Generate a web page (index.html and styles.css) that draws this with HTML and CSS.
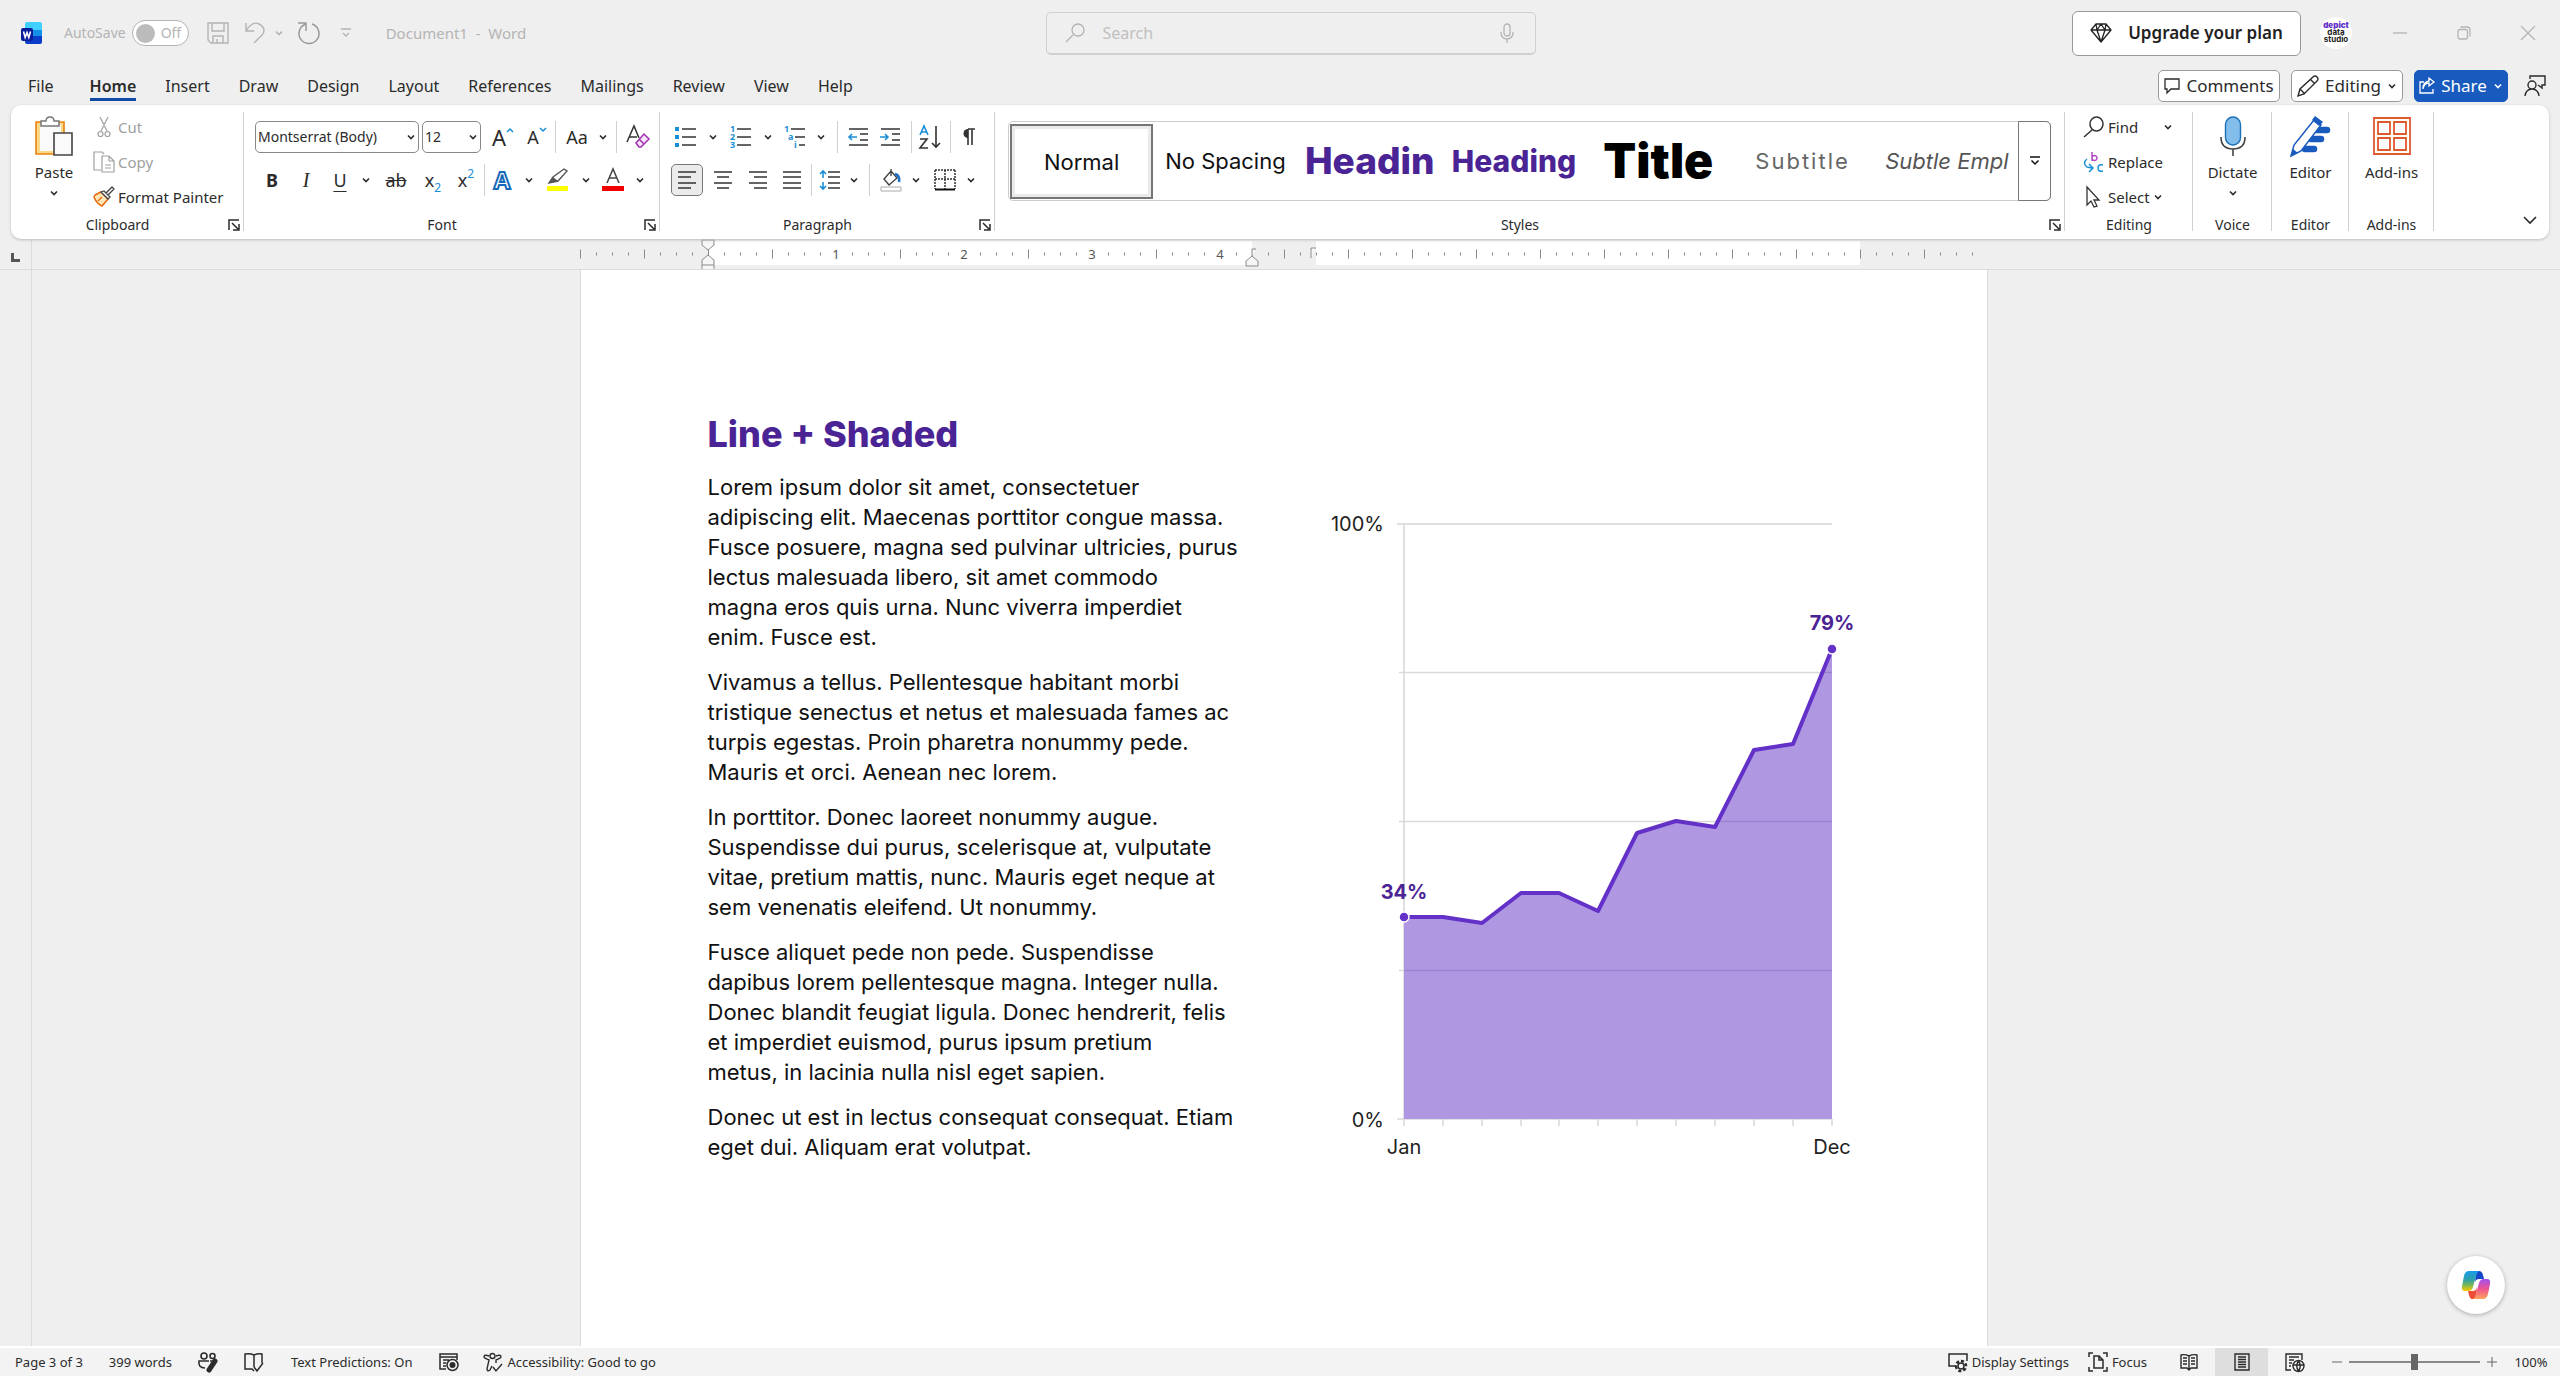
FILE: index.html
```
<!DOCTYPE html>
<html lang="en">
<head>
    <meta charset="UTF-8">
    <meta name="viewport" content="width=device-width, initial-scale=1.0">
    <title>Document1 - Word</title>
    <link rel="stylesheet" href="styles.css">
</head>
<body>
    <svg class="defs" aria-hidden="true">
        <symbol id="chev" viewBox="0 0 10 10"><path d="M2 3.5 L5 6.5 L8 3.5" fill="none" stroke="currentColor" stroke-width="1.6"/></symbol>
        <symbol id="launch" viewBox="0 0 12 12"><path d="M1 11V1H11M4 4L10 10M11 5V11H5" fill="none" stroke="currentColor" stroke-width="1.5"/></symbol>
    </svg>

    <!-- title bar -->
    <header class="titlebar">
        <div class="title-left">
            <svg class="logo" width="22" height="22" viewBox="0 0 22 22">
                <path d="M6 0H19A2 2 0 0 1 21 2V8H4V2A2 2 0 0 1 6 0Z" fill="#40d0ff"/>
                <path d="M4 8H21V15H4Z" fill="#1490e8"/>
                <path d="M4 14H21V20A2 2 0 0 1 19 22H6A2 2 0 0 1 4 20Z" fill="#0a3cc8"/>
                <rect x="0" y="6" width="12" height="13" rx="2" fill="#0a1e9c"/>
                <path d="M2.5 9.5L4.2 15.5L6 10.5L7.8 15.5L9.5 9.5" fill="none" stroke="#fff" stroke-width="1.6"/>
            </svg>
            <label class="autosave">AutoSave
                <input type="checkbox">
                <span class="toggle"><i></i>Off</span>
            </label>
            <div class="qat">
                <button aria-label="Save"><svg width="22" height="22" viewBox="0 0 22 22"><path d="M1 1H21V21H4L1 18ZM5 1V9H17V1M6 21V14H16V21M10 21V17" fill="none" stroke="currentColor" stroke-width="1.4"/></svg></button>
                <button aria-label="Undo"><svg width="20" height="22" viewBox="0 0 20 22"><path d="M1 1V9H9M1 9C5 2 10 0 14 2C20 5 20 10 17 13L9 21" fill="none" stroke="currentColor" stroke-width="1.4"/></svg></button>
                <button aria-label="Undo list"><svg width="10" height="10"><use href="#chev"/></svg></button>
                <button aria-label="Redo" class="darker"><svg width="24" height="24" viewBox="0 0 24 24"><path d="M2 2H10V10M10 3A10 10 0 1 0 16 3" fill="none" stroke="currentColor" stroke-width="1.5"/></svg></button>
                <button aria-label="Customize toolbar"><svg width="12" height="12" viewBox="0 0 12 12"><path d="M1 2H11M3 6L6 9L9 6" fill="none" stroke="currentColor" stroke-width="1.4"/></svg></button>
            </div>
            <span class="doc-title">Document1&nbsp; -&nbsp; Word</span>
        </div>
        <label class="search">
            <svg width="20" height="20" viewBox="0 0 20 20"><path d="M8 12L1 19M7 7A6 6 0 1 0 19 7A6 6 0 1 0 7 7" fill="none" stroke="currentColor" stroke-width="1.3"/></svg>
            <input type="text" placeholder="Search" aria-label="Search">
            <svg width="14" height="20" viewBox="0 0 14 20"><path d="M4 4A3 3 0 0 1 10 4V10A3 3 0 0 1 4 10ZM1 9V10A6 6 0 0 0 13 10V9M7 16V20" fill="none" stroke="currentColor" stroke-width="1.3"/></svg>
        </label>
        <div class="title-right">
            <button class="upgrade">
                <svg width="22" height="22" viewBox="0 0 22 22"><path d="M6 2H16L21 8L11 20L1 8ZM1 8H21M6 2L7 8L11 20L15 8L16 2M7 8L11 2L15 8" fill="none" stroke="currentColor" stroke-width="1.3" stroke-linejoin="round"/></svg>
                Upgrade your plan
            </button>
            <span class="avatar"><b>depict</b>data<br>studio</span>
            <div class="window-controls">
                <button aria-label="Minimize"><svg width="14" height="14" viewBox="0 0 14 14"><path d="M0 7H14" stroke="currentColor" stroke-width="1.3"/></svg></button>
                <button aria-label="Restore"><svg width="14" height="14" viewBox="0 0 14 14"><path d="M3.500 1H10Q13 1 13 4V10.500M3 3.500H8.500Q10.500 3.500 10.500 5.500V11Q10.500 13 8.500 13H3Q1 13 1 11V5.500Q1 3.500 3 3.500Z" fill="none" stroke="currentColor" stroke-width="1.3"/></svg></button>
                <button aria-label="Close"><svg width="14" height="14" viewBox="0 0 14 14"><path d="M0 0L14 14M14 0L0 14" stroke="currentColor" stroke-width="1.2"/></svg></button>
            </div>
        </div>
    </header>

    <!-- tabs -->
    <nav class="tabs">
        <button class="file">File</button>
        <button class="active">Home</button>
        <button>Insert</button>
        <button>Draw</button>
        <button>Design</button>
        <button>Layout</button>
        <button>References</button>
        <button>Mailings</button>
        <button>Review</button>
        <button>View</button>
        <button>Help</button>
        <div class="tab-actions">
            <button class="pill comments">
                <svg width="16" height="16" viewBox="0 0 16 16"><path d="M1 1H15V11H7L3 15V11H1Z" fill="none" stroke="currentColor" stroke-width="1.3"/></svg>Comments
            </button>
            <button class="pill editing">
                <svg width="22" height="22" viewBox="0 0 22 22"><path d="M1 21L3 14L16 2Q18 0 20 2Q22 4 20 6L7 19ZM3 14L8 19M13 4L18 9" fill="none" stroke="currentColor" stroke-width="1.4"/></svg>Editing
                <svg class="chev" width="10" height="10"><use href="#chev"/></svg>
            </button>
            <button class="pill share">
                <svg width="16" height="17" viewBox="0 0 16 17"><path d="M5 5H1V16H14V12M4 12Q5 6 10 6V9L15 5L10 1V4Q4 5 4 12Z" fill="none" stroke="currentColor" stroke-width="1.3"/></svg>Share
                <svg class="chev" width="10" height="10"><use href="#chev"/></svg>
            </button>
            <button class="person" aria-label="Presence"><svg width="22" height="22" viewBox="0 0 22 22"><path d="M6 4V1H21V10H18V13L14 10M1 21Q2 14 8 14Q14 14 15 21M4 10A4 4 0 1 0 12 10A4 4 0 1 0 4 10" fill="none" stroke="currentColor" stroke-width="1.4"/></svg></button>
        </div>
    </nav>

    <!-- ribbon -->
    <section class="ribbon">
        <div class="group clipboard">
            <div class="group-body">
                <button class="big">
                    <svg width="38" height="40" viewBox="0 0 38 40"><path d="M1 6H29V38H1Z" fill="#fbd98a" stroke="#e8820c" stroke-width="1.6"/><path d="M5 9H26V35H5Z" fill="#fafafa"/><path d="M6 10V5H11Q11 1 15 1Q19 1 19 5H24V10Z" fill="#fff" stroke="#777" stroke-width="1.5"/><path d="M19 17H37V39H19Z" fill="#fafafa" stroke="#444" stroke-width="1.6"/></svg>
                    <span>Paste</span>
                    <svg width="10" height="10"><use href="#chev"/></svg>
                </button>
                <div class="stack">
                    <button class="off"><svg width="22" height="22" viewBox="0 0 22 22"><path d="M7 1L14 15M15 1L8 15M5 18A2.500 2.500 0 1 0 10 18A2.500 2.500 0 1 0 5 18M12 18A2.500 2.500 0 1 0 17 18A2.500 2.500 0 1 0 12 18" fill="none" stroke="currentColor" stroke-width="1.2"/></svg>Cut</button>
                    <button class="off"><svg width="22" height="22" viewBox="0 0 22 22"><path d="M8 19H1V1H9L11 3M9 5H16L21 10V21H9ZM16 5V10H21M12 14H18M12 17H18" fill="none" stroke="currentColor" stroke-width="1.2"/></svg>Copy</button>
                    <button><svg width="22" height="22" viewBox="0 0 22 22"><path d="M2 9L8 6L15 13L9 20Q3 17 1 11Z" fill="#fde6b8" stroke="#e8690c" stroke-width="1.5"/><path d="M5 15L9 11" stroke="#e8690c" stroke-width="1.3"/><path d="M8 6L11 5L17 11L15 13ZM13 7L19 1L21 3L15 9" fill="#fff" stroke="#444" stroke-width="1.3"/></svg>Format Painter</button>
                </div>
            </div>
            <footer><span>Clipboard</span><button aria-label="Clipboard options"><svg width="12" height="12"><use href="#launch"/></svg></button></footer>
        </div>

        <div class="group font">
            <div class="group-body rows">
                <div class="row font-top">
                    <label class="combo"><select aria-label="Font"><option>Montserrat (Body)</option></select><svg width="10" height="10"><use href="#chev"/></svg></label>
                    <label class="combo"><select aria-label="Font size"><option>12</option></select><svg width="10" height="10"><use href="#chev"/></svg></label>
                    <button class="glyph grow">A<svg width="8" height="6" viewBox="0 0 8 6"><path d="M1 5L4 2L7 5" fill="none" stroke="#1b8fd6" stroke-width="1.5"/></svg></button>
                    <button class="glyph shrink">A<svg width="8" height="6" viewBox="0 0 8 6"><path d="M1 1L4 4L7 1" fill="none" stroke="#1b8fd6" stroke-width="1.5"/></svg></button>
                    <hr>
                    <button class="glyph case">Aa</button>
                    <button aria-label="Case list"><svg width="10" height="10"><use href="#chev"/></svg></button>
                    <hr>
                    <button aria-label="Clear formatting"><svg width="24" height="24" viewBox="0 0 24 24"><path d="M1 17L8 1L13 13M3 12H11" fill="none" stroke="#333" stroke-width="1.5"/><path d="M10 18L18 9L23 14L15 22H13ZM13 14L18 19" fill="#f6e4fa" stroke="#a030b0" stroke-width="1.5"/></svg></button>
                </div>
                <div class="row font-bottom">
                    <button class="glyph bold">B</button>
                    <button class="glyph italic">I</button>
                    <button class="glyph under">U</button>
                    <button aria-label="Underline list"><svg width="10" height="10"><use href="#chev"/></svg></button>
                    <button class="glyph strike">ab</button>
                    <button class="glyph script">x<sub>2</sub></button>
                    <button class="glyph script">x<sup>2</sup></button>
                    <hr>
                    <button class="glyph effects">A</button>
                    <button aria-label="Effects list"><svg width="10" height="10"><use href="#chev"/></svg></button>
                    <button aria-label="Highlight"><svg width="22" height="24" viewBox="0 0 22 24"><path d="M2 15L6 9L17 1L20 3L11 13Z" fill="#fff" stroke="#555" stroke-width="1.4"/><path d="M2 15L6 9L11 13Z" fill="#555"/><rect x="0" y="18" width="21" height="5" fill="#ff0"/></svg></button>
                    <button aria-label="Highlight list"><svg width="10" height="10"><use href="#chev"/></svg></button>
                    <button aria-label="Font color"><svg width="22" height="24" viewBox="0 0 22 24"><path d="M5 15L11 1L17 15M7 10H15" fill="none" stroke="#444" stroke-width="1.5"/><rect x="0" y="18" width="22" height="5" fill="#f00000"/></svg></button>
                    <button aria-label="Font color list"><svg width="10" height="10"><use href="#chev"/></svg></button>
                </div>
            </div>
            <footer><span>Font</span><button aria-label="Font options"><svg width="12" height="12"><use href="#launch"/></svg></button></footer>
        </div>

        <div class="group paragraph">
            <div class="group-body rows">
                <div class="row para-top">
                    <button aria-label="Bullets"><svg width="22" height="20" viewBox="0 0 22 20"><path d="M0 2H4M0 10H4M0 18H4" stroke="#1b8fd6" stroke-width="4"/><path d="M7 2H21M7 10H21M7 18H21" stroke="#333" stroke-width="1.6"/></svg></button>
                    <button aria-label="Bullet list"><svg width="10" height="10"><use href="#chev"/></svg></button>
                    <button aria-label="Numbering"><svg width="22" height="26" viewBox="0 0 22 26"><g class="tiny"><text x="0" y="8">1</text><text x="0" y="16">2</text><text x="0" y="24">3</text></g><path d="M7 5H21M7 13H21M7 21H21" stroke="#333" stroke-width="1.6"/></svg></button>
                    <button aria-label="Number list"><svg width="10" height="10"><use href="#chev"/></svg></button>
                    <button aria-label="Multilevel list"><svg width="22" height="26" viewBox="0 0 22 26"><g class="tiny"><text x="0" y="8">1</text><text x="4" y="16">a</text><text x="10" y="24">i</text></g><path d="M7 5H21M11 13H21M15 21H21" stroke="#333" stroke-width="1.6"/></svg></button>
                    <button aria-label="Levels"><svg width="10" height="10"><use href="#chev"/></svg></button>
                    <hr>
                    <button aria-label="Decrease indent"><svg width="20" height="20" viewBox="0 0 20 20"><path d="M1 2H20M12 7H20M12 13H20M1 18H20" stroke="#333" stroke-width="1.6"/><path d="M9 10H1M4 7L1 10L4 13" fill="none" stroke="#1b8fd6" stroke-width="1.6"/></svg></button>
                    <button aria-label="Increase indent"><svg width="20" height="20" viewBox="0 0 20 20"><path d="M1 2H20M12 7H20M12 13H20M1 18H20" stroke="#333" stroke-width="1.6"/><path d="M0 10H8M5 7L8 10L5 13" fill="none" stroke="#1b8fd6" stroke-width="1.6"/></svg></button>
                    <hr>
                    <button aria-label="Sort"><svg width="22" height="24" viewBox="0 0 22 24"><path d="M1 10L5 1L9 10M2 7H8" fill="none" stroke="#1b8fd6" stroke-width="1.6"/><path d="M1 14H8L1 23H9M17 1V22M13 18L17 22L21 18" fill="none" stroke="#333" stroke-width="1.6"/></svg></button>
                    <hr>
                    <button class="glyph" aria-label="Show marks"><svg width="14" height="18" viewBox="0 0 14 18"><path d="M6 1A4.500 4.500 0 0 0 6 10Z" fill="#333"/><path d="M6 1H13M6 1V17M10 1V17" stroke="#333" stroke-width="1.6"/></svg></button>
                </div>
                <div class="row para-bottom">
                    <button class="pressed" aria-label="Align left"><svg width="20" height="20" viewBox="0 0 20 20"><path d="M1 2H19M1 7H14M1 13H19M1 18H14" stroke="#333" stroke-width="1.6"/></svg></button>
                    <button aria-label="Center"><svg width="20" height="20" viewBox="0 0 20 20"><path d="M1 2H19M4 7H16M1 13H19M4 18H16" stroke="#333" stroke-width="1.6"/></svg></button>
                    <button aria-label="Align right"><svg width="20" height="20" viewBox="0 0 20 20"><path d="M1 2H19M6 7H19M1 13H19M6 18H19" stroke="#333" stroke-width="1.6"/></svg></button>
                    <button aria-label="Justify"><svg width="20" height="20" viewBox="0 0 20 20"><path d="M1 2H19M1 7H19M1 13H19M1 18H19" stroke="#333" stroke-width="1.6"/></svg></button>
                    <hr>
                    <button aria-label="Line spacing"><svg width="22" height="20" viewBox="0 0 22 20"><path d="M9 2H21M9 7H21M9 13H21M9 18H21" stroke="#333" stroke-width="1.6"/><path d="M4 8V1M1 4L4 1L7 4M4 12V19M1 16L4 19L7 16" fill="none" stroke="#1b8fd6" stroke-width="1.6"/></svg></button>
                    <button aria-label="Spacing list"><svg width="10" height="10"><use href="#chev"/></svg></button>
                    <hr>
                    <button aria-label="Shading"><svg width="22" height="24" viewBox="0 0 22 24"><path d="M4 11L11 3L17 10L9 17ZM11 3V1M11 3V8" fill="#fff" stroke="#444" stroke-width="1.4"/><path d="M15 6Q20 7 19 14" fill="none" stroke="#1b6fc6" stroke-width="2.500"/><path d="M1 19H21V23H1Z" fill="#fff" stroke="#aaa"/></svg></button>
                    <button aria-label="Shading list"><svg width="10" height="10"><use href="#chev"/></svg></button>
                    <button aria-label="Borders"><svg width="22" height="22" viewBox="0 0 22 22"><path d="M1 1H21M1 10H21M1 1V20M11 1V20M21 1V20" stroke="#333" stroke-width="1.500" stroke-dasharray="2 1"/><path d="M1 20.500H21" stroke="#111" stroke-width="2"/></svg></button>
                    <button aria-label="Border list"><svg width="10" height="10"><use href="#chev"/></svg></button>
                </div>
            </div>
            <footer><span>Paragraph</span><button aria-label="Paragraph options"><svg width="12" height="12"><use href="#launch"/></svg></button></footer>
        </div>

        <div class="group styles">
            <div class="group-body">
                <div class="gallery">
                    <button class="style selected">Normal</button>
                    <button class="style">No Spacing</button>
                    <button class="style h1">Headin</button>
                    <button class="style h2">Heading</button>
                    <button class="style title">Title</button>
                    <button class="style subtitle">Subtitle</button>
                    <button class="style emphasis">Subtle Empl</button>
                    <button class="more" aria-label="More styles"><svg width="12" height="12" viewBox="0 0 12 12"><path d="M1 2H11M2.500 5.500L6 9L9.500 5.500" fill="none" stroke="currentColor" stroke-width="1.5"/></svg></button>
                </div>
            </div>
            <footer><span>Styles</span><button aria-label="Styles options"><svg width="12" height="12"><use href="#launch"/></svg></button></footer>
        </div>

        <div class="group edit">
            <div class="group-body">
                <div class="stack">
                    <button><svg width="22" height="22" viewBox="0 0 22 22"><path d="M9 14L1 21M7 8A6.500 7 0 1 0 20 8A6.500 7 0 1 0 7 8" fill="none" stroke="#333" stroke-width="1.5"/></svg>Find<svg class="chev far" width="10" height="10"><use href="#chev"/></svg></button>
                    <button><svg width="22" height="22" viewBox="0 0 22 22"><path d="M9 1V10M9 7A2.500 2.500 0 1 1 14 7A2.500 2.500 0 1 1 9 7" fill="none" stroke="#b04cc0" stroke-width="1.5"/><path d="M4 8Q-1 12 4 16L9 17M6 13L10 17L6 21M20 14Q15 13 15 17Q15 21 20 20" fill="none" stroke="#1b8fd6" stroke-width="1.5"/></svg>Replace</button>
                    <button><svg width="22" height="22" viewBox="0 0 22 22"><path d="M4 1V19L8 15L11 21L14 20L11 14H16Z" fill="#fff" stroke="#333" stroke-width="1.3"/></svg>Select<svg class="chev" width="10" height="10"><use href="#chev"/></svg></button>
                </div>
            </div>
            <footer><span>Editing</span></footer>
        </div>

        <div class="group voice">
            <div class="group-body">
                <button class="big">
                    <svg width="26" height="40" viewBox="0 0 26 40"><rect x="5.500" y="1" width="15" height="28" rx="7.500" fill="#83bdec" stroke="#1a6fb5" stroke-width="1.4"/><path d="M1 21Q1 33 13 33Q25 33 25 21M13 33V40" fill="none" stroke="#444" stroke-width="1.6"/></svg>
                    <span>Dictate</span>
                    <svg width="10" height="10"><use href="#chev"/></svg>
                </button>
            </div>
            <footer><span>Voice</span></footer>
        </div>

        <div class="group editor">
            <div class="group-body">
                <button class="big">
                    <svg width="42" height="40" viewBox="0 0 42 40"><path d="M26 14H37M21 23H31M15 33H24" stroke="#185abd" stroke-width="6.500" stroke-linecap="round"/><path d="M1 40L4 29L24 4L31 9L11 35Z" fill="#fff" stroke="#185abd" stroke-width="1.5"/><path d="M22 4L25 0L33 6L29 10Z" fill="#185abd"/><path d="M1 40L3 33L8 37Z" fill="#185abd"/></svg>
                    <span>Editor</span>
                </button>
            </div>
            <footer><span>Editor</span></footer>
        </div>

        <div class="group addins">
            <div class="group-body">
                <button class="big">
                    <svg width="38" height="40" viewBox="0 0 38 40"><path d="M1 2H37V38H1ZM5 6H17V18H5ZM21 6H33V18H21ZM5 22H17V34H5ZM21 22H33V34H21Z" fill="none" stroke="#e05a2b" stroke-width="1.8"/></svg>
                    <span>Add-ins</span>
                </button>
            </div>
            <footer><span>Add-ins</span></footer>
        </div>

        <button class="collapse" aria-label="Collapse ribbon"><svg width="14" height="10" viewBox="0 0 14 10"><path d="M1 2L7 8L13 2" fill="none" stroke="currentColor" stroke-width="1.6"/></svg></button>
    </section>

    <!-- horizontal ruler -->
    <div class="ruler">
        <div class="corner"><svg width="10" height="10" viewBox="0 0 10 10"><path d="M1.500 1V8.500H9" fill="none" stroke="#555" stroke-width="3"/></svg></div>
        <div class="ruler-track">
            <svg width="1408" height="30" viewBox="0 0 1408 30">
                <rect x="128" y="2" width="544" height="24" fill="#fff"/>
                <rect x="736" y="2" width="544" height="24" fill="#fff"/>
                <path d="M0 15H1408" stroke="#8a8a8a" stroke-width="3" stroke-dasharray="1 15"/>
                <path d="M0 15H1408" stroke="#8a8a8a" stroke-width="9" stroke-dasharray="1 63"/>
                <path d="M249 5H263V24H249ZM377 5H391V24H377ZM505 5H519V24H505ZM633 5H647V24H633Z" fill="#fff"/>
                <g class="inches"><text x="256" y="20">1</text><text x="384" y="20">2</text><text x="512" y="20">3</text><text x="640" y="20">4</text></g>
                <path d="M122 1H134V6L128 11L122 6ZM122 30V21L128 16L134 21V30M122 26H134M666 27V22L672 17L678 22V27ZM672 17V10H676M731 19V9H736" fill="#f6f6f6" stroke="#8a8a8a"/>
            </svg>
        </div>
    </div>

    <!-- document -->
    <main class="workspace">
        <div class="side-ruler"></div>
        <div class="canvas">
            <article class="page">
                <div class="copy">
                    <h1>Line + Shaded</h1>
                    <p>Lorem ipsum dolor sit amet, consectetuer<br>adipiscing elit. Maecenas porttitor congue massa.<br>Fusce posuere, magna sed pulvinar ultricies, purus<br>lectus malesuada libero, sit amet commodo<br>magna eros quis urna. Nunc viverra imperdiet<br>enim. Fusce est.</p>
                    <p>Vivamus a tellus. Pellentesque habitant morbi<br>tristique senectus et netus et malesuada fames ac<br>turpis egestas. Proin pharetra nonummy pede.<br>Mauris et orci. Aenean nec lorem.</p>
                    <p>In porttitor. Donec laoreet nonummy augue.<br>Suspendisse dui purus, scelerisque at, vulputate<br>vitae, pretium mattis, nunc. Mauris eget neque at<br>sem venenatis eleifend. Ut nonummy.</p>
                    <p>Fusce aliquet pede non pede. Suspendisse<br>dapibus lorem pellentesque magna. Integer nulla.<br>Donec blandit feugiat ligula. Donec hendrerit, felis<br>et imperdiet euismod, purus ipsum pretium<br>metus, in lacinia nulla nisl eget sapien.</p>
                    <p>Donec ut est in lectus consequat consequat. Etiam<br>eget dui. Aliquam erat volutpat.</p>
                </div>
                <svg class="chart" viewBox="0 0 544 750">
                    <path d="M81 114H516M88 114V709" stroke="#e0e0e0" stroke-width="2" fill="none"/>
                    <path d="M83 262.500H516M83 411.500H516M83 560.500H516" stroke="#d9d9d9" stroke-width="1.500"/>
                    <path d="M81 709H516M88 709V716M127 709V716M166 709V716M205 709V716M243 709V716M282 709V716M321 709V716M360 709V716M399 709V716M438 709V716M477 709V716M516 709V716" stroke="#d9d9d9" stroke-width="1.500"/>
                    <path d="M88 507L127 507L166 513L205 483L243 483L282 501L321 423L360 411L399 417L438 340L477 334L516 239V709H88Z" fill="#b097e2"/>
                    <path d="M402 411.500H516M88 560.500H516M507 262.500H516" fill="none" stroke="#9b82cf" stroke-width="1.500"/>
                    <path d="M88 507L127 507L166 513L205 483L243 483L282 501L321 423L360 411L399 417L438 340L477 334L516 239" fill="none" stroke="#6330c8" stroke-width="4" stroke-linejoin="round"/>
                    <circle cx="88" cy="507" r="5" fill="#6330c8" stroke="#fff" stroke-width="1.500"/>
                    <circle cx="516" cy="239" r="5" fill="#6330c8" stroke="#fff" stroke-width="1.500"/>
                    <text class="end" x="68" y="121">100%</text>
                    <text class="end" x="68" y="717">0%</text>
                    <text class="mid" x="88" y="744">Jan</text>
                    <text class="mid" x="516" y="744">Dec</text>
                    <text class="mid value" x="88" y="489">34%</text>
                    <text class="mid value" x="516" y="220">79%</text>
                </svg>
            </article>
        </div>
        <button class="copilot" aria-label="Copilot">
            <svg width="30" height="28" viewBox="0 0 30 28">
                <defs>
                    <linearGradient id="cool" x1="0" y1="0" x2="0" y2="1"><stop offset="0" stop-color="#189be8"/><stop offset=".45" stop-color="#2ea1a8"/><stop offset=".75" stop-color="#8dbb46"/><stop offset="1" stop-color="#ffc800"/></linearGradient>
                    <linearGradient id="warm" x1="0" y1="0" x2="0" y2="1"><stop offset="0" stop-color="#a04ff0"/><stop offset=".5" stop-color="#ee5590"/><stop offset="1" stop-color="#ffa45c"/></linearGradient>
                </defs>
                <path d="M15 0H18Q21 0 22 4L23 8H18Q15 8 14 11Z" fill="#1346c8"/>
                <path d="M15 28H11Q9 28 8 24L7 20H12Q15 20 16 16Z" fill="#ee4c34"/>
                <path d="M8 0H18Q16 1 15 5L12 16Q11 20 7 20H4Q0 20 1 15L3 5Q4 0 8 0Z" fill="url(#cool)"/>
                <path d="M22 28H12Q14 27 15 23L18 12Q19 8 23 8H26Q30 8 29 13L27 23Q26 28 22 28Z" fill="url(#warm)"/>
            </svg>
        </button>
    </main>

    <!-- status bar -->
    <footer class="statusbar">
        <button>Page 3 of 3</button>
        <button class="words">399 words</button>
        <button aria-label="Coauthoring"><svg width="22" height="20" viewBox="0 0 22 20"><path d="M3 4A3 3 0 1 0 9 4A3 3 0 1 0 3 4M12 4A2.500 2.500 0 1 0 17 4A2.500 2.500 0 1 0 12 4M11 9H1Q0 16 7 16M12 9H17" fill="none" stroke="currentColor" stroke-width="1.6"/><path d="M11 18L17 9" stroke="currentColor" stroke-width="5" stroke-linecap="round"/></svg></button>
        <button class="proof" aria-label="Proofing"><svg width="20" height="20" viewBox="0 0 20 20"><path d="M10 3Q6 1 1 2V17H8L10 19M10 3Q14 1 18 2V11M10 3V15M10 15L13 19L19 11" fill="none" stroke="currentColor" stroke-width="1.5"/></svg></button>
        <button class="predict">Text Predictions: On</button>
        <button aria-label="Macro"><svg width="20" height="20" viewBox="0 0 20 20"><path d="M7 17H1V2H18V8M1 5H18M4 8H10M4 11H7M4 14H7M8 13A5.500 5.500 0 1 0 19 13A5.500 5.500 0 1 0 8 13" fill="none" stroke="currentColor" stroke-width="1.5"/><circle cx="13.500" cy="13" r="3" fill="currentColor"/></svg></button>
        <button class="access"><svg width="20" height="20" viewBox="0 0 20 20"><path d="M7 4A2.500 2.500 0 1 0 12 4A2.500 2.500 0 1 0 7 4M6 4Q1 2 1 5Q1 6 6 8L4 17Q4 20 7 18L9 14M13 4Q18 2 18 5Q18 6 13 8V11M10 15L13 19L19 12" fill="none" stroke="currentColor" stroke-width="1.4"/></svg>Accessibility: Good to go</button>
        <div class="status-right">
            <button><svg width="20" height="20" viewBox="0 0 20 20"><path d="M8 14H1V2H19V9" fill="none" stroke="currentColor" stroke-width="1.5"/><path d="M8 14A5 5 0 1 0 18 14A5 5 0 1 0 8 14" fill="none" stroke="currentColor" stroke-width="2.500" stroke-dasharray="3 2"/><circle cx="13" cy="14" r="3" fill="none" stroke="currentColor" stroke-width="1.5"/></svg>Display Settings</button>
            <button><svg width="20" height="20" viewBox="0 0 20 20"><path d="M1 5V1H5M15 1H19V5M19 15V19H15M5 19H1V15M6 4H11L15 8V16H6ZM11 4V8H15" fill="none" stroke="currentColor" stroke-width="1.5"/></svg>Focus</button>
            <div class="views">
                <button aria-label="Read mode"><svg width="18" height="18" viewBox="0 0 18 18"><path d="M9 3Q5 1 1 2V15H7L9 17L11 15H17V2Q13 1 9 3V16M3 5H7M3 8H7M3 11H7M11 5H15M11 8H15M11 11H15" fill="none" stroke="currentColor" stroke-width="1.4"/></svg></button>
                <button class="on" aria-label="Print layout"><svg width="16" height="18" viewBox="0 0 16 18"><path d="M1 1H15V17H1ZM4 4H12M4 6.500H12M4 9H12M4 11.500H12M4 14H12" fill="none" stroke="currentColor" stroke-width="1.4"/></svg></button>
                <button aria-label="Web layout"><svg width="20" height="19" viewBox="0 0 20 19"><path d="M6 17H1V1H17V7M4 4H14M4 7H9M4 10H7M4 13H6M8 13A5 5 0 1 0 19 13A5 5 0 1 0 8 13M8 12H19M13.500 8Q10 13 13.500 18Q17 13 13.500 8" fill="none" stroke="currentColor" stroke-width="1.4"/></svg></button>
            </div>
            <button class="step" aria-label="Zoom out"><svg width="12" height="12" viewBox="0 0 12 12"><path d="M1 6H11" stroke="#666"/></svg></button>
            <input class="zoom" type="range" min="0" max="100" value="50" aria-label="Zoom">
            <button class="step" aria-label="Zoom in"><svg width="12" height="12" viewBox="0 0 12 12"><path d="M1 6H11M6 1V11" stroke="#666"/></svg></button>
            <button class="percent">100%</button>
        </div>
    </footer>
</body>
</html>
```
FILE: styles.css
```
* {
    box-sizing: border-box;
}
body {
    margin: 0;
    height: 100vh;
    display: flex;
    flex-direction: column;
    overflow: hidden;
    background-color: #efefef;
    color: #2b2b2b;
    font-family: "Noto Sans", sans-serif;
    font-size: 15px;
    line-height: 20px;
}
button, input, select {
    font: inherit;
    color: inherit;
}
button {
    display: flex;
    align-items: center;
    justify-content: center;
    padding: 0;
    border: 0;
    background: none;
    white-space: nowrap;
}
svg {
    display: block;
    flex-shrink: 0;
    overflow: visible;
}
.defs {
    display: none;
}

/* title bar */
.titlebar {
    display: grid;
    grid-template-columns: minmax(0, 1fr) 490px minmax(0, 1fr);
    align-items: center;
    height: 66px;
    padding-left: 21px;
    color: #b4b4b4;
}
.title-left, .title-right {
    display: flex;
    align-items: center;
}
.title-right {
    justify-content: flex-end;
}
.autosave {
    display: flex;
    align-items: center;
    gap: 6px;
    margin-left: 21px;
    font-size: 14px;
}
.autosave input {
    position: absolute;
    opacity: 0;
}
.toggle {
    display: flex;
    align-items: center;
    gap: 6px;
    width: 57px;
    height: 26px;
    padding-left: 3px;
    border: 1px solid #b4b4b4;
    border-radius: 13px;
    background-color: #fff;
}
.toggle i {
    width: 19px;
    height: 19px;
    border-radius: 50%;
    background-color: #bbb;
}
.qat {
    display: grid;
    grid-template-columns: 40px 34px 14px 44px 32px;
    margin-left: 9px;
}
.darker {
    color: #9a9a9a;
}
.doc-title {
    margin-left: 24px;
}
.search {
    display: flex;
    align-items: center;
    gap: 18px;
    height: 43px;
    padding: 0 21px 0 18px;
    border: 1px solid #d0d0d0;
    border-bottom-width: 2px;
    border-radius: 5px;
}
.search input {
    flex: 1;
    padding: 0;
    border: 0;
    outline: 0;
    background: none;
    font-size: 16px;
}
.search input::placeholder {
    color: #c0c0c0;
}
.upgrade {
    gap: 16px;
    width: 229px;
    height: 45px;
    margin-right: 19px;
    border: 1px solid #999;
    border-radius: 6px;
    background-color: #fff;
    color: #222;
    font-size: 17px;
    font-weight: 600;
}
.avatar {
    width: 32px;
    height: 32px;
    padding-top: 5px;
    margin-right: 16px;
    border-radius: 50%;
    background-color: #fff;
    color: #222;
    font-family: Inter, sans-serif;
    font-size: 8px;
    font-weight: 700;
    line-height: 7px;
    text-align: center;
}
.avatar b {
    display: block;
    color: #6330c8;
}
.window-controls {
    display: grid;
    grid-template-columns: repeat(3, 64px);
}

/* tabs */
.tabs {
    display: flex;
    align-items: center;
    gap: 29px;
    height: 39px;
    padding: 0 14px 0 28px;
    font-size: 16px;
}
.tabs > button {
    height: 31px;
    border-top: 3px solid transparent;
    border-bottom: 3px solid transparent;
}
.tabs .file {
    margin-right: 7px;
}
.tabs .active {
    border-bottom-color: #1249a5;
    font-weight: 600;
}
.tab-actions {
    display: flex;
    align-items: center;
    gap: 11px;
    margin-left: auto;
}
.pill {
    gap: 6px;
    height: 32px;
    border: 1px solid #999;
    border-radius: 5px;
    background-color: #fff;
    font-size: 17px;
}
.comments {
    width: 122px;
}
.editing {
    width: 112px;
}
.share {
    width: 94px;
    margin-right: 5px;
    border-color: #185abd;
    background-color: #185abd;
    color: #fff;
}

/* ribbon */
.ribbon {
    position: relative;
    z-index: 1;
    display: flex;
    height: 134px;
    margin: 0 11px;
    border-radius: 10px;
    background-color: #fff;
    box-shadow: 0 1px 3px #bbb;
}
.group {
    position: relative;
    display: flex;
    flex-direction: column;
    justify-content: space-between;
}
.group::after {
    content: "";
    position: absolute;
    top: 7px;
    right: 0;
    bottom: 8px;
    border-right: 1px solid #d0d0d0;
}
.group-body {
    display: flex;
    height: 110px;
}
.group footer {
    display: flex;
    align-items: center;
    height: 20px;
    margin-bottom: 4px;
    font-size: 14px;
}
.group footer span {
    flex: 1;
    text-align: center;
}
.group footer button {
    width: 12px;
    margin: 0 4px;
}
.clipboard {
    width: 233px;
}
.font {
    width: 416px;
}
.paragraph {
    width: 335px;
}
.styles {
    flex: 1;
}
.edit {
    width: 128px;
}
.voice {
    width: 79px;
}
.editor {
    width: 77px;
}
.addins {
    width: 85px;
}
.collapse {
    align-items: flex-end;
    width: 115px;
    padding: 0 0 14px 76px;
}
.big {
    flex: 1;
    flex-direction: column;
    justify-content: flex-start;
    gap: 6px;
    padding-top: 11px;
}
.clipboard .big {
    flex: none;
    width: 82px;
    padding-left: 4px;
}
.stack {
    display: grid;
    grid-template-rows: repeat(3, 35px);
    padding-top: 4px;
}
.stack button {
    justify-content: flex-start;
    gap: 3px;
}
.edit .stack {
    padding-left: 18px;
}
.far {
    margin-left: 22px;
}
.off {
    color: #a0a0a0;
}
.rows {
    flex-direction: column;
    gap: 11px;
    padding: 16px 0 0 11px;
}
.paragraph .rows {
    padding-left: 9px;
}
.row {
    display: grid;
    height: 32px;
}
.row hr {
    width: 1px;
    height: 32px;
    margin: 0 auto;
    border: 0;
    background-color: #d0d0d0;
}
.font-top {
    grid-template-columns: 167px 62px 38px 30px 6px 38px 14px 12px 32px;
}
.font-bottom {
    grid-template-columns: 34px 34px 34px 18px 42px 32px 34px 2px 34px 20px 38px 18px 36px 18px;
}
.para-top {
    grid-template-columns: 34px 20px 36px 18px 36px 16px 16px 26px 38px 4px 34px 6px 32px;
}
.para-bottom {
    grid-template-columns: 36px 36px 34px 34px 4px 34px 14px 16px 28px 22px 36px 16px;
}
.combo {
    display: grid;
    align-items: center;
    margin-right: 3px;
}
.combo select {
    grid-area: 1 / 1;
    height: 32px;
    padding: 0 2px;
    border: 1px solid #888;
    border-radius: 5px;
    background-color: #fff;
    appearance: none;
    font-size: 14px;
}
.combo svg {
    grid-area: 1 / 1;
    justify-self: end;
    margin-right: 3px;
    pointer-events: none;
}
.glyph {
    font-size: 18px;
}
.grow {
    font-size: 22px;
}
.grow svg, .shrink svg {
    align-self: flex-start;
    margin-top: 6px;
}
.bold {
    font-weight: 700;
}
.italic {
    font-family: "Liberation Serif", serif;
    font-style: italic;
    font-size: 20px;
}
.under {
    text-decoration: underline;
    text-underline-offset: 4px;
}
.strike {
    text-decoration: line-through;
}
.script sub, .script sup {
    color: #1b8fd6;
    font-size: 12px;
    line-height: 12px;
}
.script sub {
    align-self: flex-end;
    margin-bottom: 2px;
}
.script sup {
    align-self: flex-start;
    margin-top: 4px;
}
.effects {
    color: #fff;
    font-size: 24px;
    font-weight: 700;
    -webkit-text-stroke: 2px #1668b8;
}
.tiny {
    fill: #1b8fd6;
    font-size: 9px;
    font-weight: 700;
}
.pressed {
    margin: 0 2px;
    border: 1px solid #777;
    border-radius: 5px;
    background-color: #ebebeb;
}

/* styles gallery */
.gallery {
    display: grid;
    grid-template-columns: repeat(7, minmax(0, 1fr)) 31px;
    flex: 1;
    height: 80px;
    margin: 16px 14px 0 13px;
    border: 1px solid #ccc;
    border-radius: 5px;
    color: #111;
}
.style {
    overflow: hidden;
    font-family: Inter, sans-serif;
    font-size: 22px;
    line-height: 60px;
}
.selected {
    margin: 2px 0 1px 1px;
    border: 2px solid #767676;
    box-shadow: inset 0 0 0 3px #ebebeb;
}
.h1, .h2, .title {
    font-weight: 800;
    color: #4a2394;
}
.h1 {
    font-size: 37px;
}
.h2 {
    font-size: 30px;
}
.title {
    color: #000;
    font-size: 48px;
    font-weight: 900;
}
.subtitle {
    color: #666;
    letter-spacing: 2px;
}
.emphasis {
    color: #555;
    font-style: italic;
}
.more {
    margin: -1px;
    border: 1px solid #777;
    border-radius: 0 5px 5px 0;
}

/* rulers */
.ruler {
    display: flex;
    height: 31px;
    padding-right: 25px;
    border-bottom: 1px solid #dcdcdc;
}
.corner {
    width: 32px;
    padding: 13px 0 0 11px;
    border-right: 1px solid #dcdcdc;
}
.ruler-track {
    display: flex;
    flex: 1;
    justify-content: center;
}
.inches {
    fill: #555;
    font-size: 13px;
    text-anchor: middle;
}
.side-ruler {
    width: 32px;
    border-right: 1px solid #dcdcdc;
}

/* document */
.workspace {
    position: relative;
    display: flex;
    flex: 1;
    min-height: 0;
    padding-right: 25px;
}
.canvas {
    display: flex;
    flex: 1;
    justify-content: center;
}
.page {
    display: grid;
    grid-template-columns: minmax(0, 1fr) minmax(0, 1fr);
    align-items: start;
    gap: 64px;
    width: 100%;
    max-width: 1408px;
    padding: 140px 127px 0;
    border: 1px solid #dcdcdc;
    border-width: 0 1px;
    background-color: #fff;
    color: #111;
    font-family: Inter, sans-serif;
}
.copy {
    font-size: 22px;
    line-height: 30px;
    white-space: nowrap;
}
.copy h1 {
    margin: 0 0 14px;
    color: #4a2394;
    font-size: 36px;
    font-weight: 800;
    line-height: 48px;
}
.copy p {
    margin: 0 0 15px;
}
.chart {
    width: 100%;
    fill: #222;
    font-size: 20px;
}
.end {
    text-anchor: end;
}
.mid {
    text-anchor: middle;
}
.value {
    fill: #4a2394;
    font-weight: 700;
}
.copilot {
    position: absolute;
    right: 55px;
    bottom: 32px;
    width: 58px;
    height: 58px;
    border-radius: 50%;
    background-color: #fff;
    box-shadow: 0 1px 4px #aaa;
}

/* status bar */
.statusbar {
    display: flex;
    height: 30px;
    padding: 0 12px 0 15px;
    border-top: 2px solid #fff;
    background-color: #f3f3f3;
    font-size: 13px;
}
.words {
    margin: 0 26px;
}
.proof {
    margin: 0 27px 0 24px;
}
.predict {
    margin-right: 27px;
}
.access {
    gap: 4px;
    margin-left: 24px;
}
.status-right {
    display: flex;
    margin-left: auto;
}
.status-right > button {
    gap: 4px;
    margin-right: 19px;
}
.views {
    display: grid;
    grid-template-columns: repeat(3, 53px);
    margin: 0 4px 0 -4px;
}
.views .on {
    background-color: #dedede;
}
.status-right .step {
    margin: 0 6px;
}
.zoom {
    width: 131px;
    margin: 0;
    background: none;
    appearance: none;
}
.zoom::-webkit-slider-runnable-track {
    height: 2px;
    background-color: #888;
}
.zoom::-webkit-slider-thumb {
    width: 7px;
    height: 16px;
    margin-top: -7px;
    background-color: #666;
    appearance: none;
}
.status-right .percent {
    width: 34px;
    margin: 0 0 0 10px;
}
```
